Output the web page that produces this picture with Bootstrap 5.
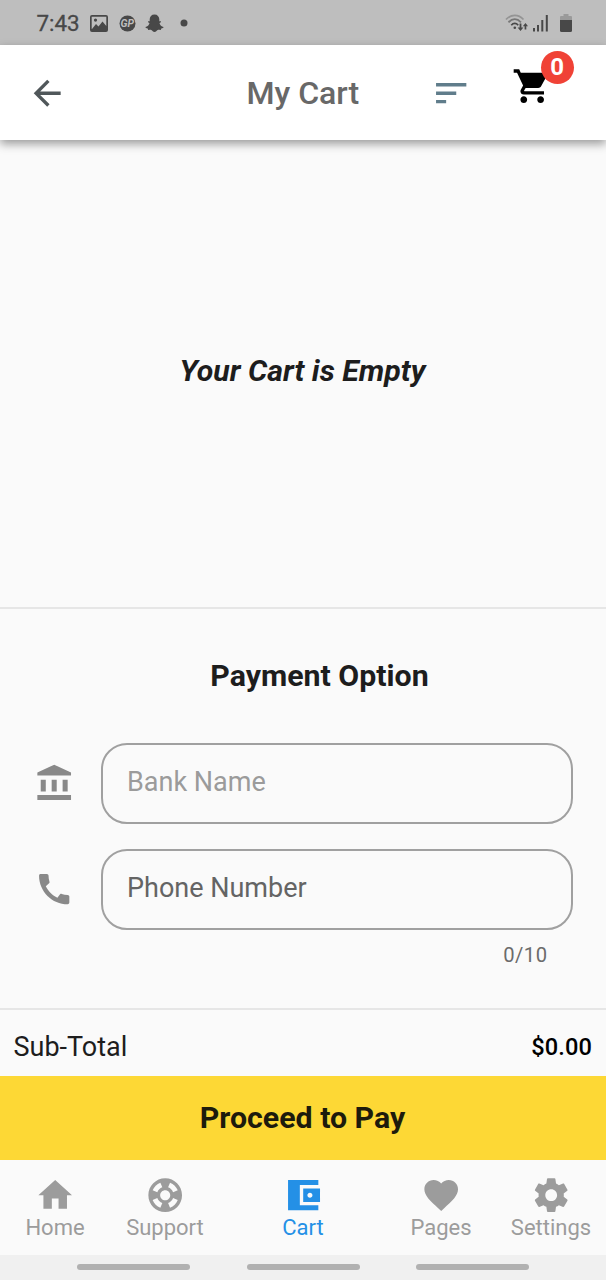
<!DOCTYPE html>
<html lang="en">
<head>
<meta charset="utf-8">
<meta name="viewport" content="width=device-width, initial-scale=1">
<title>My Cart</title>
<link href="https://cdn.jsdelivr.net/npm/bootstrap@5.3.0/dist/css/bootstrap.min.css" rel="stylesheet">
<style>
  body { font-family: Roboto, sans-serif; background: #fafafa; color: #1d1d1d; height: 1280px; overflow: hidden; line-height: 1.2; }
  svg { display: block; flex: none; fill: currentColor; }
  .status-bar { height: 45px; background: #bebebe; color: #484848; padding: 1px 32px 0 36.5px; }
  .status-time { font-size: 22.4px; width: 53px; padding-top: 1px; -webkit-text-stroke: .3px; }
  .glyph-app { margin-left: 11px; }
  .glyph-ghost { margin-left: 9.5px; }
  .glyph-dot { margin-left: 16px; }
  .glyph-signal { margin-left: 5px; }
  .glyph-battery { margin: 0 2px 0 10px; }
  .app-bar { height: 95px; background: #fff; box-shadow: 0 4px 9px rgba(0,0,0,.38); z-index: 1; padding: 1px 27px 0; }
  .app-title { font-size: 32.1px; font-weight: 500; color: #686868; margin-left: 179px; padding-top: 1px; }
  .back-icon { color: #50575a; }
  .sort-icon { color: #607d8b; margin-right: 40px; }
  .cart-wrap { margin: -13px 27px 0 0; color: #000; }
  .icon-24 { width: 40.4px; height: 40.4px; }
  .count-badge { top: -15px; left: 29px; width: 33px; height: 33px; background: #f04236; color: #fff; font-size: 24px; font-weight: 700; }
  .empty-area { height: 467px; padding: 0 1px 5px 0; font-size: 30.3px; font-weight: 700; }
  .payment { height: 401px; border-top: 2px solid #e6e6e6; padding: 48px 33px 0 34px; }
  .payment-title { font-size: 30.3px; font-weight: 700; padding-left: 32px; line-height: 38px; margin-bottom: 48px; }
  .field-icon { width: 40.4px; height: 40.4px; color: #898989; margin-right: 26.6px; }
  .field-box.form-control { height: 81px; border: 2px solid #a0a0a0; border-radius: 26px; background: transparent; padding: 0 24px 3px; font-size: 27px; box-shadow: none; }
  .field-box::placeholder { color: #9b9b9b; opacity: 1; }
  .field-phone::placeholder { color: #646464; }
  .phone-row { margin-top: 25px; }
  .counter { font-size: 20.2px; color: #6b6b6b; padding: 13px 25.5px 0 0; letter-spacing: .5px; }
  .subtotal { height: 68px; border-top: 2px solid #e6e6e6; padding: 8px 14px 0 13.5px; font-size: 27px; }
  .amount { font-size: 23.6px; font-weight: 500; color: #000; letter-spacing: .1px; }
  .pay-btn.btn { height: 84px; background: #fdd835; color: #1d1b0c; font-size: 30.3px; font-weight: 700; }
  .pay-btn span { margin-left: -1px; }
  .tabs { height: 95px; background: #fafafa; color: #9c9c9c; }
  .tab { width: 110px; padding-top: 15px; font-size: 22px; line-height: 26px; color: inherit; text-decoration: none; }
  .tab-current { width: 166px; color: #2490e6; }
  .gesture-bar { height: 25px; background: #f0f0f0; gap: 56.500px; padding-bottom: 1px; }
  .pill { width: 113px; height: 6px; border-radius: 3px; background: #b1b1b1; }
</style>
</head>
<body class="d-flex flex-column">
<div class="status-bar d-flex align-items-center">
  <span class="status-time">7:43</span>
  <svg width="18" height="17" viewBox="0 0 18 17"><path fill-rule="evenodd" d="M2 0h14a2 2 0 0 1 2 2v13a2 2 0 0 1-2 2H2a2 2 0 0 1-2-2V2a2 2 0 0 1 2-2zm-.3 1.700v12.300h14.600V1.700zM2 14l4-5 2.500 2.500 4-5L16.300 11v3zM5.500 3.500a1.600 1.600 0 1 1 0 3.200 1.600 1.600 0 0 1 0-3.200z"/></svg>
  <svg class="glyph-app" width="17" height="17" viewBox="0 0 17 17"><circle cx="8.500" cy="8.500" r="8"/><text x="8.200" y="12.200" text-anchor="middle" font-size="10.500" font-weight="700" font-style="italic" fill="#bebebe">GP</text></svg>
  <svg class="glyph-ghost" width="19" height="19" viewBox="0 0 19 19"><path d="M9.500.5C12.500.5 14.300 2.600 14.300 5.300v2c.7.2 1.400-.2 1.700.3.300.8-1 1.200-1.500 1.700.5 2 2 3.300 4 3.800.3.900-1 1.300-2.200 1.500-.3.500-.2 1-.6 1.300-1 .2-2-.3-3 .2-1 .7-1.800 1.900-3.200 1.900s-2.200-1.200-3.200-1.900c-1-.5-2 0-3-.2-.4-.3-.3-.8-.6-1.300C1.500 14.400.2 14 .5 13.100c2-.5 3.500-1.800 4-3.800C4 8.800 2.700 8.400 3 7.600c.3-.5 1-.1 1.700-.3v-2C4.700 2.600 6.500.5 9.500.5z"/></svg>
  <svg class="glyph-dot" width="8" height="8" viewBox="0 0 8 8"><circle cx="4" cy="4" r="3.500"/></svg>
  <svg class="ms-auto" width="23" height="18" viewBox="0 0 23 18"><g fill="none" stroke="#484848" stroke-width="1.700"><path d="M1 5.500C6-.1 13.500-.1 18.500 5.500" opacity=".35"/><path d="M3.500 8.300C7.500 4 12 4 16 8.300" opacity=".6"/><path d="M6.300 11.200c2-2.400 4.900-2.400 6.900 0"/></g><circle cx="9.800" cy="13.700" r="1.300"/><path d="M14.600 9.500v4h-2L15.500 17l2.900-3.500h-2v-4zM19.600 15.500v-3.300h-1.800L20.500 9l2.500 3.200h-1.700v3.300z"/></svg>
  <svg class="glyph-signal" width="17" height="18" viewBox="0 0 17 18"><path d="M0 14h2v3.500H0zM4 11h2v6.500H4zM8.300 6h2v11.500h-2zM12.800 1h2v16.500h-2z"/></svg>
  <svg class="glyph-battery" width="12" height="18" viewBox="0 0 12 18"><path d="M3.500 0h5v2H11a1 1 0 0 1 1 1v3H0V3a1 1 0 0 1 1-1h2.500z" opacity=".3"/><path d="M0 6h12v10.500a1.500 1.500 0 0 1-1.500 1.500h-9A1.500 1.500 0 0 1 0 16.500z"/></svg>
</div>

<header class="app-bar d-flex align-items-center position-relative">
  <svg class="icon-24 back-icon" viewBox="0 0 24 24"><path d="M20 11H7.830l5.590-5.590L12 4l-8 8 8 8 1.410-1.410L7.830 13H20v-2z"/></svg>
  <h1 class="app-title mb-0">My Cart</h1>
  <svg class="icon-24 sort-icon ms-auto" viewBox="0 0 24 24"><path d="M3 18h6v-2H3v2zM3 6v2h18V6H3zm0 7h12v-2H3v2z"/></svg>
  <div class="cart-wrap position-relative">
    <svg class="icon-24" viewBox="0 0 24 24"><path d="M7 18c-1.100 0-1.990.9-1.990 2S5.900 22 7 22s2-.9 2-2-.9-2-2-2zM1 2v2h2l3.600 7.590-1.350 2.450c-.16.280-.25.610-.25.960 0 1.100.9 2 2 2h12v-2H7.420c-.14 0-.25-.11-.25-.25l.03-.12.900-1.630h7.450c.75 0 1.410-.41 1.750-1.030l3.580-6.490A1.003 1.003 0 0 0 20 4H5.210l-.94-2H1zm16 16c-1.100 0-1.990.9-1.990 2s.89 2 1.990 2 2-.9 2-2-.9-2-2-2z"/></svg>
    <span class="count-badge position-absolute rounded-circle d-flex align-items-center justify-content-center">0</span>
  </div>
</header>

<main>
  <section class="empty-area d-flex align-items-center justify-content-center fst-italic">Your Cart is Empty</section>
  <section class="payment">
    <h2 class="payment-title text-center">Payment Option</h2>
    <div class="d-flex align-items-center">
      <svg class="field-icon" viewBox="0 0 24 24"><path d="M4 10v7h3v-7zm6.500 0v7h3v-7zM2 22h20v-3H2zm15-12v7h3v-7zM12 1L2 5.700v1.700h20V5.700z"/></svg>
      <input class="form-control field-box" type="text" placeholder="Bank Name" aria-label="Bank Name">
    </div>
    <div class="phone-row d-flex align-items-center">
      <svg class="field-icon" viewBox="0 0 24 24"><path d="M20.010 15.380c-1.230 0-2.420-.2-3.530-.56-.35-.12-.74-.03-1.010.240l-1.570 1.970c-2.830-1.350-5.480-3.900-6.890-6.830l1.950-1.660c.27-.28.350-.67.240-1.020-.37-1.110-.56-2.300-.56-3.530 0-.54-.45-.99-.99-.99H4.190C3.650 3 3 3.240 3 3.990 3 13.280 10.730 21 20.010 21c.71 0 .99-.63.990-1.180v-3.450c0-.54-.45-.99-.99-.99z"/></svg>
      <input class="form-control field-box field-phone" type="tel" placeholder="Phone Number" aria-label="Phone Number">
    </div>
    <div class="counter text-end">0/10</div>
  </section>
  <section class="subtotal d-flex align-items-center justify-content-between">
    <span>Sub-Total</span><span class="amount">$0.00</span>
  </section>
  <button class="btn pay-btn w-100 rounded-0 border-0 d-block p-0" type="button"><span>Proceed to Pay</span></button>
</main>

<nav class="tabs d-flex">
  <a class="tab d-flex flex-column align-items-center" href="#"><svg class="icon-24" viewBox="0 0 24 24"><path d="M10 20v-6h4v6h5v-8h3L12 3 2 12h3v8z"/></svg>Home</a>
  <a class="tab d-flex flex-column align-items-center" href="#"><svg class="icon-24" viewBox="0 0 24 24"><path d="M12 2C6.480 2 2 6.480 2 12s4.480 10 10 10 10-4.480 10-10S17.520 2 12 2zm7.460 7.120l-2.780 1.150c-.51-1.360-1.580-2.440-2.950-2.940l1.150-2.780c2.100.8 3.770 2.470 4.580 4.570zM12 15c-1.660 0-3-1.340-3-3s1.340-3 3-3 3 1.340 3 3-1.340 3-3 3zM9.130 4.540l1.170 2.780c-1.380.5-2.470 1.590-2.980 2.970L4.540 9.130c.81-2.110 2.480-3.780 4.590-4.590zM4.540 14.870l2.780-1.150c.51 1.380 1.590 2.460 2.970 2.960l-1.170 2.780c-2.100-.81-3.770-2.480-4.580-4.590zm10.340 4.590l-1.150-2.780c1.370-.51 2.450-1.590 2.950-2.970l2.780 1.170c-.81 2.100-2.480 3.770-4.580 4.580z"/></svg>Support</a>
  <a class="tab tab-current d-flex flex-column align-items-center" href="#"><svg class="icon-24" viewBox="0 0 24 24"><path d="M21 18v3H3V3h18v3H10v12h11zm-9-2h10V8H12v8zm4-2.500c-.83 0-1.500-.67-1.500-1.500s.67-1.500 1.500-1.500 1.500.67 1.500 1.500-.67 1.500-1.500 1.500z"/></svg>Cart</a>
  <a class="tab d-flex flex-column align-items-center" href="#"><svg class="icon-24" viewBox="0 0 24 24"><path d="M12 21.350l-1.450-1.320C5.400 15.360 2 12.280 2 8.500 2 5.420 4.420 3 7.500 3c1.740 0 3.410.81 4.500 2.090C13.090 3.810 14.760 3 16.500 3 19.580 3 22 5.420 22 8.500c0 3.780-3.400 6.860-8.550 11.540L12 21.350z"/></svg>Pages</a>
  <a class="tab d-flex flex-column align-items-center" href="#"><svg class="icon-24" viewBox="0 0 24 24"><path d="M19.430 12.980c.04-.32.070-.64.070-.98s-.03-.66-.07-.98l2.110-1.650c.19-.15.240-.42.120-.64l-2-3.460c-.12-.22-.39-.3-.61-.22l-2.490 1c-.52-.4-1.080-.73-1.690-.98l-.38-2.650C14.460 2.180 14.250 2 14 2h-4c-.25 0-.46.180-.49.420l-.38 2.650c-.61.250-1.170.59-1.690.98l-2.490-1c-.23-.09-.49 0-.61.220l-2 3.460c-.13.220-.07.490.12.640l2.110 1.650c-.04.320-.07.650-.07.980s.03.660.07.980l-2.110 1.650c-.19.150-.24.420-.12.640l2 3.460c.12.220.39.300.61.220l2.490-1c.52.400 1.080.73 1.690.98l.38 2.650c.03.240.24.420.49.420h4c.25 0 .46-.18.490-.42l.38-2.650c.61-.25 1.170-.59 1.690-.98l2.490 1c.23.090.49 0 .61-.22l2-3.460c.12-.22.070-.49-.12-.64l-2.110-1.650zM12 15.500c-1.930 0-3.500-1.570-3.500-3.500s1.570-3.500 3.500-3.500 3.500 1.570 3.500 3.500-1.570 3.500-3.500 3.500z"/></svg>Settings</a>
</nav>
<div class="gesture-bar d-flex align-items-center justify-content-center"><span class="pill"></span><span class="pill"></span><span class="pill"></span></div>
<script src="https://cdn.jsdelivr.net/npm/bootstrap@5.3.0/dist/js/bootstrap.bundle.min.js"></script>
</body>
</html>
